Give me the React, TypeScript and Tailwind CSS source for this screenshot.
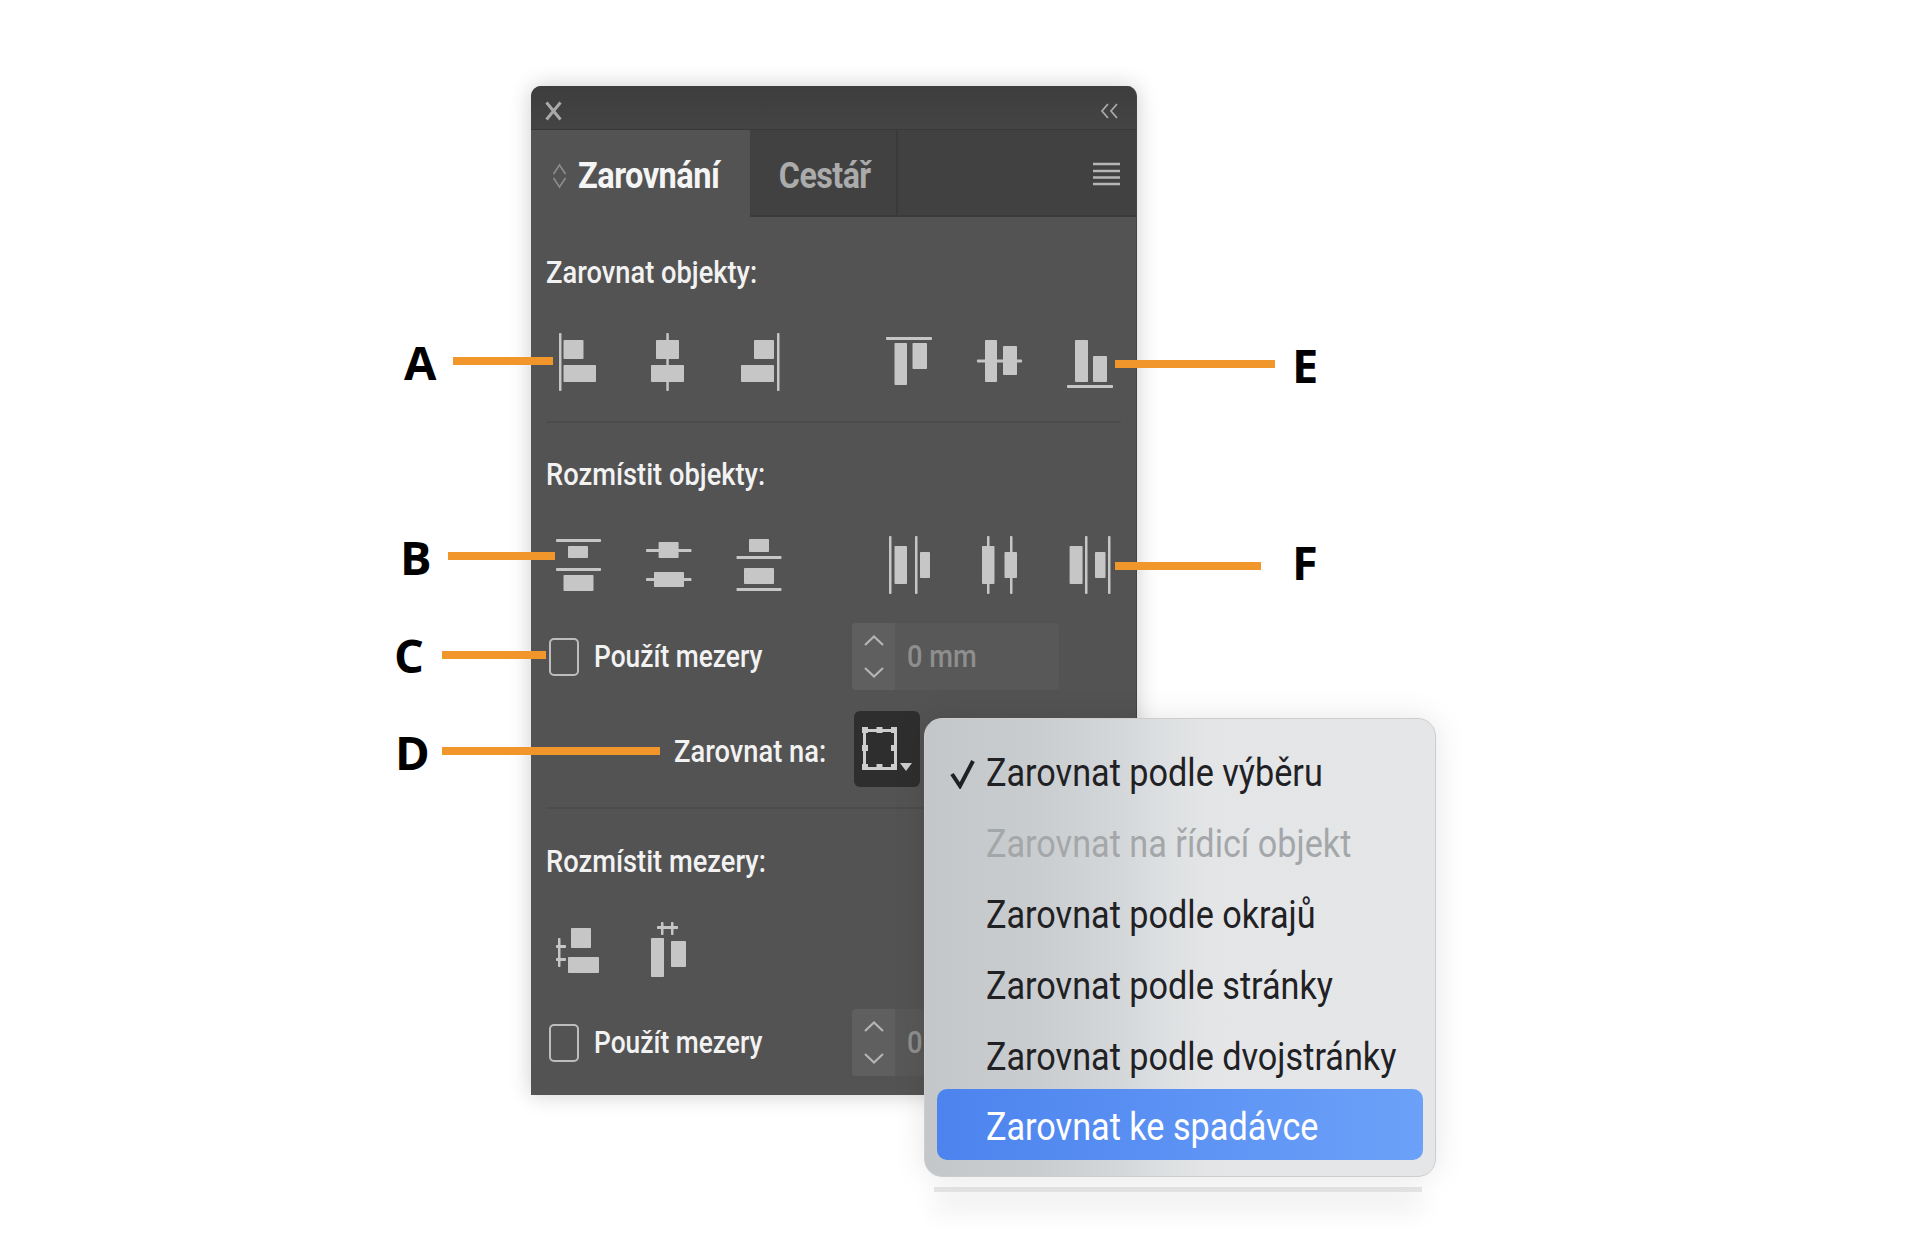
import clsx from 'clsx'

const font = { fontFamily: 'Roboto, "Liberation Sans", sans-serif' }

type Bar = [number, number, number, number]

// one icon cell, bars are given in cell pixels
const IconCell = ({ bars, h = 60 }: { bars: Bar[]; h?: number }) => (
  <svg width="90" height={h} viewBox={`0 0 90 ${h}`} className="shrink-0 block">
    {bars.map(([x, y, w, bh], i) => (
      <rect key={i} x={x} y={y} width={w} height={bh} rx="0.8" fill="#c6c6c6" />
    ))}
  </svg>
)

const alignIcons: Bar[][] = [
  [[26, 0, 2.5, 58], [30.5, 7, 20, 19], [30.5, 32, 32.5, 17]],
  [[43.3, 0, 2.5, 58], [33, 7, 23, 19], [28, 32, 33, 17]],
  [[64, 0, 2.5, 58], [41, 7, 20, 19], [28, 32, 33, 17]],
  [[22, 4, 46, 3], [30.5, 10, 12.5, 42], [48.5, 10, 14.5, 26]],
  [[23, 26.5, 45, 3], [31, 7, 12, 42], [49, 13, 14, 29]],
  [[23, 52, 46, 3], [31, 7, 13, 42], [49, 23, 14, 26]],
]

const distributeIcons: Bar[][] = [
  [[23, 3, 45, 3], [23, 32, 45, 3], [35, 10, 20, 12], [30.5, 39, 30, 16]],
  [[23, 13, 45.5, 3], [23, 42, 45.5, 3], [35.6, 6, 20, 16], [31, 36, 30, 15]],
  [[23.5, 20, 45, 3], [23.5, 52, 45, 3], [36, 3, 20, 13], [31, 32, 30, 16]],
  [[25, 0, 2.5, 58], [51, 0, 2.5, 58], [30.5, 10, 12.5, 38], [56, 16, 10, 26]],
  [[33, 0, 2.5, 58], [56, 0, 2.5, 58], [28, 10, 12.5, 38], [50.5, 16, 12.5, 26]],
  [[41, 0, 2.5, 58], [64, 0, 2.5, 58], [25.6, 10, 13, 38], [51, 16, 10.5, 26]],
]

const spaceIcons: Bar[][] = [
  [[38, 6, 20, 20], [35, 35, 31, 16], [25, 16, 2.5, 29], [23, 23, 10, 3], [23, 36, 10, 3]],
  [[28, 16, 13, 39], [48, 19, 15, 26], [34, 4, 21, 3], [38, 0, 2.5, 13], [48, 0, 2.5, 13]],
]

const IconRow = ({ icons }: { icons: Bar[][] }) => (
  <div className="flex pl-[2px]">
    {icons.map((bars, i) => (
      <div key={i} className={clsx(i === 3 && 'ml-[61px]')}>
        <IconCell bars={bars} />
      </div>
    ))}
  </div>
)

const labelText = 'block origin-left text-[31px] font-medium text-[#f2f2f2] whitespace-nowrap'

const SectionLabel = ({ children }: { children: string }) => (
  <div className="pl-[15px] pt-[2px] h-[36px] flex items-center">
    <span className={clsx(labelText, 'scale-x-[0.88]')}>{children}</span>
  </div>
)

const Divider = () => <div className="mx-[15px] h-[2px] bg-[#4c4c4c]" />

const Stepper = () => (
  <div className="ml-[71px] flex w-[207px] h-[67px] rounded-[4px] bg-[#585858] overflow-hidden">
    <div className="w-[43px] bg-[#5f5f5f] flex flex-col items-center justify-center gap-[21px]">
      <svg width="20" height="11" viewBox="0 0 20 11">
        <path d="M1 10 L10 1.5 L19 10" fill="none" stroke="#b4b4b4" strokeWidth="2.2" />
      </svg>
      <svg width="20" height="11" viewBox="0 0 20 11">
        <path d="M1 1 L10 9.5 L19 1" fill="none" stroke="#b4b4b4" strokeWidth="2.2" />
      </svg>
    </div>
    <div className="pl-[12px] pt-[2px] flex items-center">
      <span className="origin-left text-[31px] text-[#8e8e8e] font-medium whitespace-nowrap scale-x-[0.88]">0 mm</span>
    </div>
  </div>
)

const GapsRow = () => (
  <div className="flex items-center pl-[18px]">
    <div className="w-[30px] h-[38px] rounded-[5px] border-[2px] border-[#bdbdbd]" />
    <div className="ml-[15px] pt-[2px] w-[188px]">
      <span className={clsx(labelText, 'scale-x-[0.85]')}>Použít mezery</span>
    </div>
    <div className="-ml-[1px]">
      <Stepper />
    </div>
  </div>
)

const ArtboardIcon = () => (
  <svg width="66" height="77" viewBox="0 0 66 77" className="block">
    <rect x="10.5" y="19.5" width="31" height="38" fill="none" stroke="#cdcdcd" strokeWidth="3" />
    {[[8, 16], [22.5, 16], [37, 16], [8, 34], [37, 34], [8, 53], [22.5, 53], [37, 53]].map(([x, y], i) => (
      <rect key={i} x={x} y={y} width="6" height="6" fill="#cdcdcd" />
    ))}
    <path d="M46 52 H58 L52 60 Z" fill="#cdcdcd" />
  </svg>
)

const Panel = () => (
  <div className="w-[606px] rounded-t-[10px] bg-[#535353] border-r border-[#444444] shadow-[0_0_22px_rgba(0,0,0,0.2)] overflow-hidden">
    <div className="h-[44px] px-[14px] pt-[6px] flex items-center justify-between bg-[linear-gradient(#3d3d3d,#444444)] border-b border-[#383838]">
      <svg width="17" height="20" viewBox="0 0 17 20">
        <path d="M1.5 1.5 L15.5 18.5 M15.5 1.5 L1.5 18.5" stroke="#a9a9a9" strokeWidth="3" fill="none" />
      </svg>
      <svg width="19" height="16" viewBox="0 0 19 16" className="mr-[3px]">
        <path d="M8 1 L2 8 L8 15 M17 1 L11 8 L17 15" stroke="#a9a9a9" strokeWidth="1.8" fill="none" />
      </svg>
    </div>
    <div className="h-[87px] flex bg-[#414141]">
      <div className="w-[219px] bg-[#535353] flex items-center pl-[21px] pt-[5px]">
        <svg width="15" height="26" viewBox="0 0 15 26">
          <path d="M1.5 11 L7.5 2 L13.5 11 M1.5 15 L7.5 24 L13.5 15" stroke="#8c8c8c" strokeWidth="1.6" fill="none" />
        </svg>
        <span className="ml-[11px] origin-left text-[37px] font-bold tracking-[-0.6px] text-[#f5f5f5] scale-x-[0.88]">Zarovnání</span>
      </div>
      <div className="w-[148px] pt-[6px] pl-[3px] flex items-center justify-center border-r-2 border-b-2 border-[#3a3a3a]">
        <span className="text-[37px] font-bold tracking-[-0.6px] text-[#ababab] scale-x-[0.87]">Cestář</span>
      </div>
      <div className="flex-1 flex items-center justify-end pr-[16px] pt-[3px] border-b-2 border-[#3a3a3a]">
        <svg width="27" height="24" viewBox="0 0 27 24">
          <path d="M0 2 H27 M0 9 H27 M0 15.5 H27 M0 22 H27" stroke="#b5b5b5" strokeWidth="2.4" />
        </svg>
      </div>
    </div>

    <div className="mt-[37px]"><SectionLabel>Zarovnat objekty:</SectionLabel></div>
    <div className="mt-[43px]"><IconRow icons={alignIcons} /></div>
    <div className="mt-[28px]"><Divider /></div>
    <div className="mt-[33px]"><SectionLabel>Rozmístit objekty:</SectionLabel></div>
    <div className="mt-[44px]"><IconRow icons={distributeIcons} /></div>
    <div className="mt-[27px]"><GapsRow /></div>

    <div className="mt-[21px] h-[76px] flex items-center">
      <div className="ml-[143px] w-[180px] pt-[6px]">
        <span className={clsx(labelText, 'scale-x-[0.88]')}>Zarovnat na:</span>
      </div>
      <div className="w-[66px] h-[76px] rounded-[6px] bg-[#2e2e2e]">
        <ArtboardIcon />
      </div>
    </div>

    <div className="mt-[20px]"><Divider /></div>
    <div className="mt-[34px]"><SectionLabel>Rozmístit mezery:</SectionLabel></div>
    <div className="mt-[43px] flex pl-[2px]">
      {spaceIcons.map((bars, i) => <IconCell key={i} bars={bars} h={56} />)}
    </div>
    <div className="mt-[31px] pb-[19px]"><GapsRow /></div>
  </div>
)

const menuItems = [
  'Zarovnat podle výběru',
  'Zarovnat na řídicí objekt',
  'Zarovnat podle okrajů',
  'Zarovnat podle stránky',
  'Zarovnat podle dvojstránky',
]

const menuText = 'block origin-left scale-x-[0.9]'

const Menu = () => (
  <>
    <div className="absolute left-[934px] top-[1187px] w-[488px] h-[5px] bg-[#e6e6e6] shadow-[0_14px_26px_rgba(0,0,0,0.24)]" />
    <div className="absolute left-[924px] top-[718px] w-[512px] h-[459px] pt-[19px] rounded-[18px] border border-[#cdcdcd] bg-[linear-gradient(90deg,#c4c7c9_0%,#cacdcf_22%,#d4d7d9_38%,#dcdfe1_46%,#e4e5e7_56%,#e5e6e8_100%)] shadow-[0_0_32px_rgba(0,0,0,0.1)] text-[38px]">
      {menuItems.map((item, i) => (
        <div key={item} className={clsx('relative h-[71px] pl-[61px] flex items-center whitespace-nowrap', i === 1 ? 'text-[#a4a7a9]' : 'text-[#1f2124]')}>
          {i === 0 && (
            <svg width="26" height="30" viewBox="0 0 26 30" className="absolute left-[25px] top-[21px]">
              <path d="M2 15 L10 27 L23 2" fill="none" stroke="#1f2124" strokeWidth="4" />
            </svg>
          )}
          <span className={menuText}>{item}</span>
        </div>
      ))}
      <div className="mx-[12px] -mt-[4px] h-[71px] pl-[49px] pt-[5px] flex items-center rounded-[10px] bg-[linear-gradient(90deg,#4c83ee,#6ca1f9)] text-white whitespace-nowrap">
        <span className={menuText}>Zarovnat ke spadávce</span>
      </div>
    </div>
  </>
)

const lineClass = 'absolute h-[8px] bg-[#f0962a]'
const letterClass = 'absolute text-[47px] leading-none font-bold text-black'

const Callouts = () => (
  <div style={{ fontFamily: '"Open Sans", sans-serif' }}>
    <div className={clsx(lineClass, 'left-[453px] top-[357px] w-[100px]')} />
    <div className={clsx(lineClass, 'left-[448px] top-[552px] w-[107px]')} />
    <div className={clsx(lineClass, 'left-[442px] top-[651px] w-[104px]')} />
    <div className={clsx(lineClass, 'left-[442px] top-[747px] w-[218px]')} />
    <div className={clsx(lineClass, 'left-[1115px] top-[360px] w-[160px]')} />
    <div className={clsx(lineClass, 'left-[1115px] top-[562px] w-[146px]')} />
    <span className={clsx(letterClass, 'left-[404px] top-[339px]')}>A</span>
    <span className={clsx(letterClass, 'left-[400px] top-[534px]')}>B</span>
    <span className={clsx(letterClass, 'left-[394px] top-[632px]')}>C</span>
    <span className={clsx(letterClass, 'left-[395px] top-[729px]')}>D</span>
    <span className={clsx(letterClass, 'left-[1292px] top-[342px]')}>E</span>
    <span className={clsx(letterClass, 'left-[1292px] top-[539px]')}>F</span>
  </div>
)

export default function App() {
  return (
    <div className="relative w-[1920px] h-[1240px] overflow-hidden bg-white pt-[86px] pl-[531px]" style={font}>
      <Panel />
      <Callouts />
      <Menu />
    </div>
  )
}
